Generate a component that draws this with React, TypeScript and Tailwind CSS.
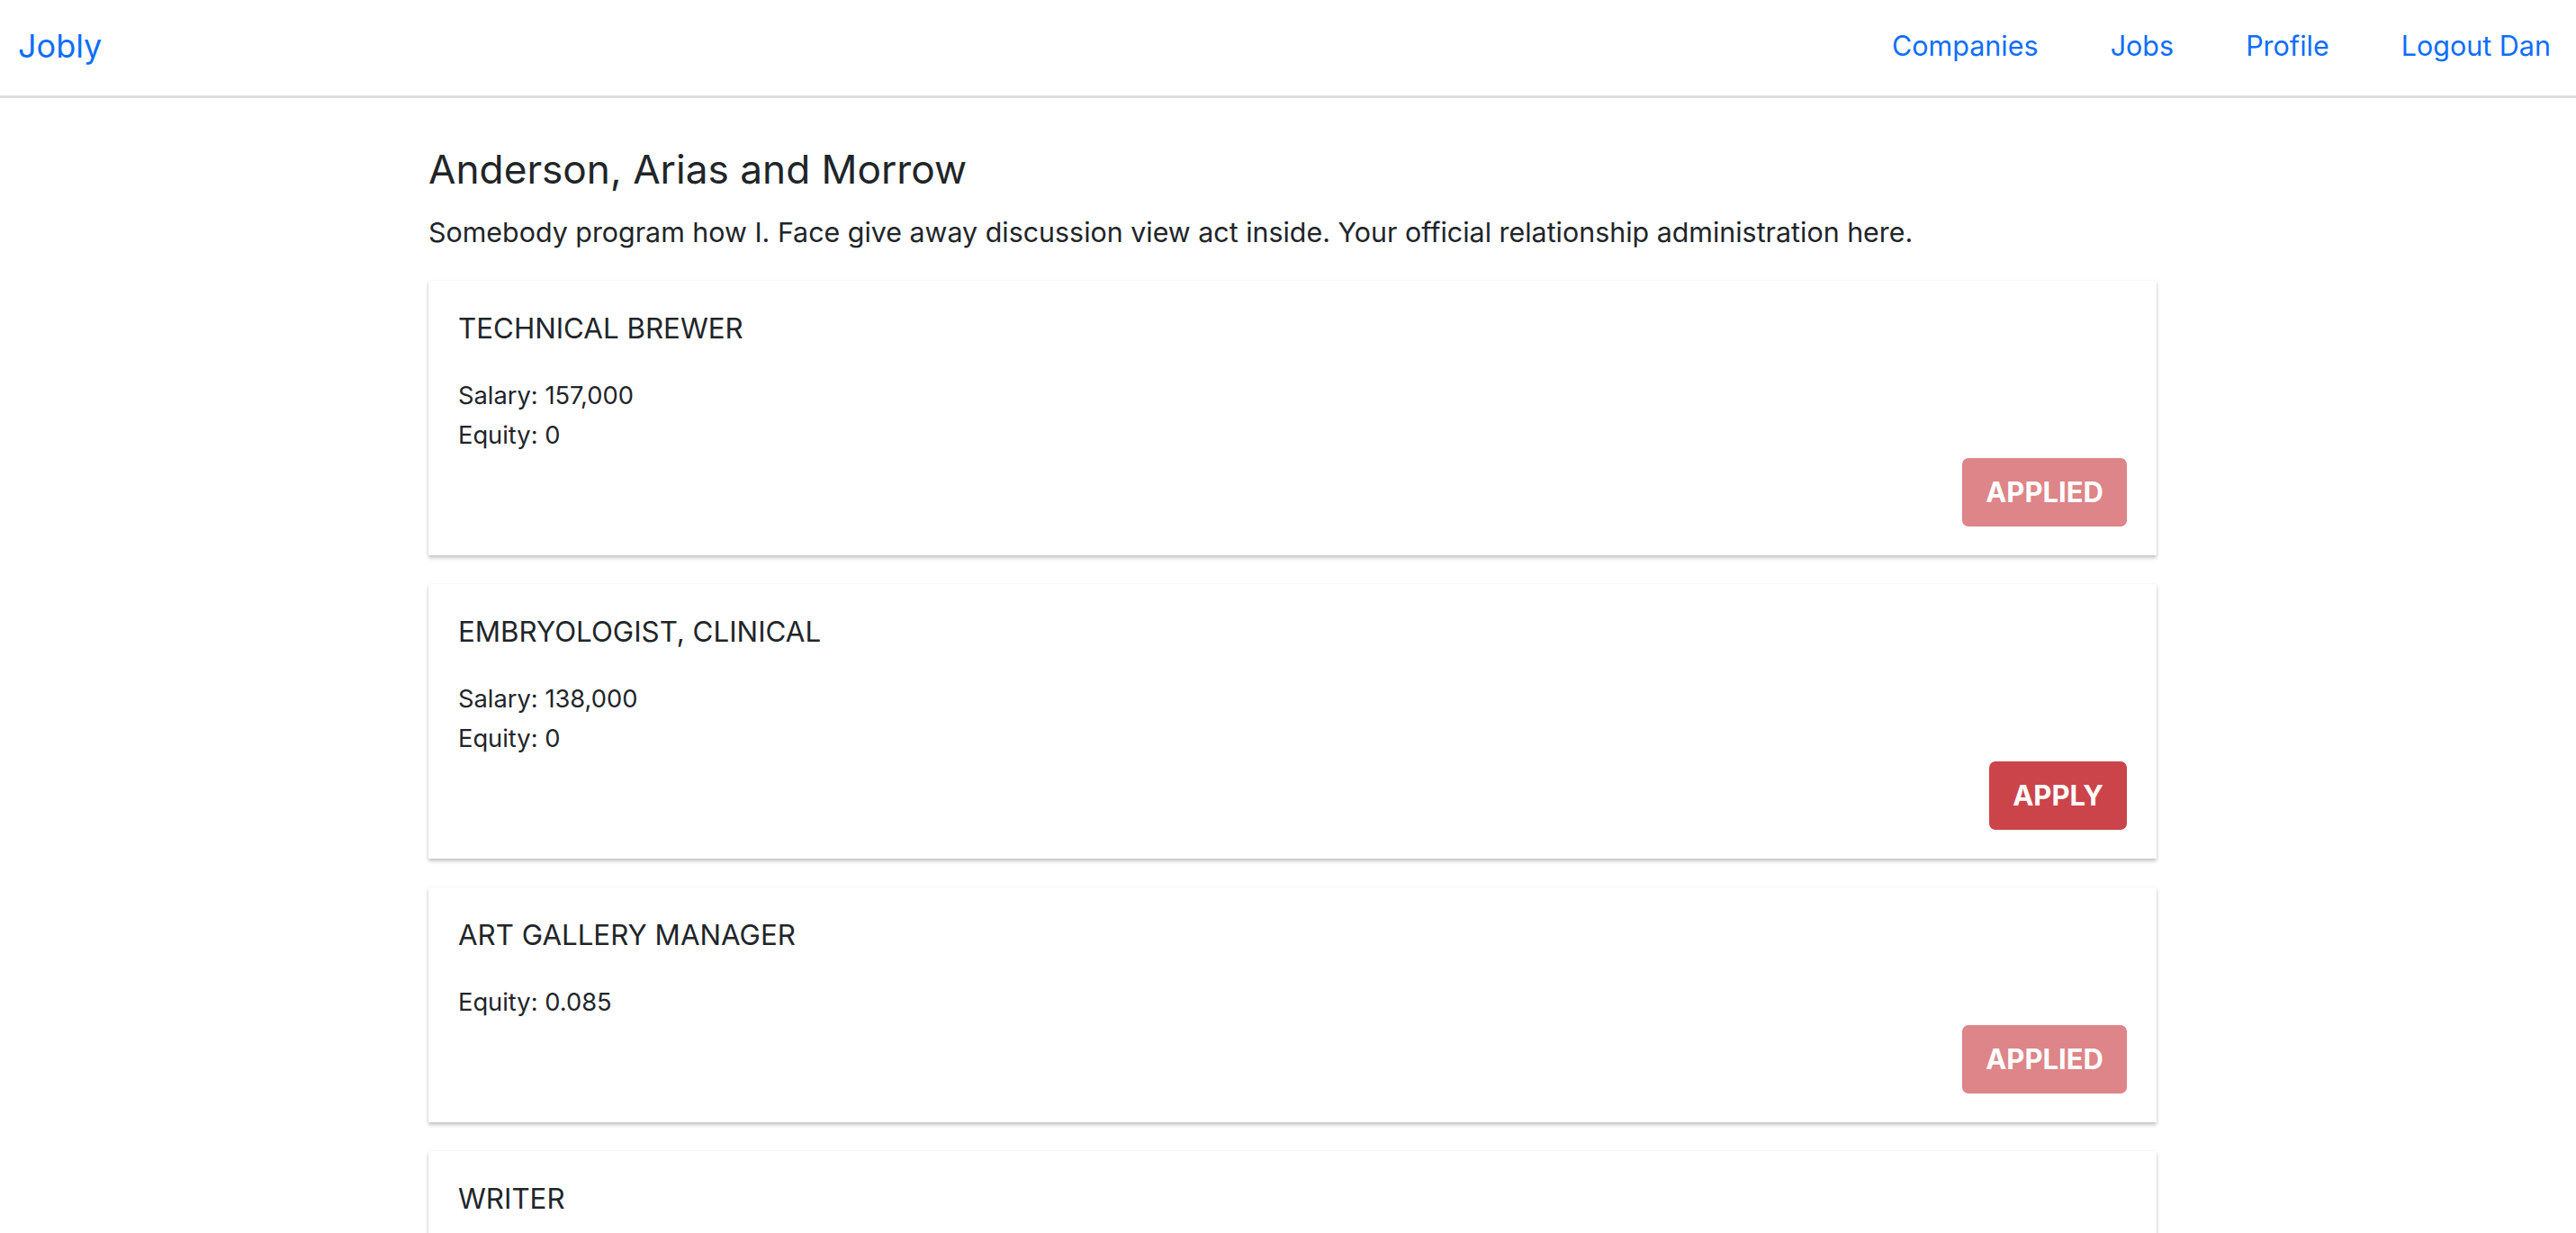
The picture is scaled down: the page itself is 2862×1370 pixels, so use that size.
import React from 'react';

type Job = {
  id: number;
  title: string;
  salary: string | null;
  equity: string | null;
  applied: boolean;
};

const jobs: Job[] = [
  { id: 1, title: 'Technical brewer', salary: '157,000', equity: '0', applied: true },
  { id: 2, title: 'Embryologist, clinical', salary: '138,000', equity: '0', applied: false },
  { id: 3, title: 'Art gallery manager', salary: null, equity: '0.085', applied: true },
  { id: 4, title: 'Writer', salary: '76,000', equity: '0', applied: false },
];

const NavBar = () => (
  <nav className="h-[109px] flex items-center justify-between pl-[20px] pr-[28px] pb-[4px] border-b-[3px] border-[#dedede] bg-white">
    <a className="text-[36px] leading-none text-[#0d6efd]">Jobly</a>
    <div className="flex items-center gap-[80px] text-[30.5px] text-[#0d6efd]">
      <a>Companies</a>
      <a>Jobs</a>
      <a>Profile</a>
      <a>Logout Dan</a>
    </div>
  </nav>
);

const JobCard = ({ job }: { job: Job }) => (
  <div className="bg-white px-[33px] pt-[35px] pb-[32px] shadow-[0_3px_4px_rgba(0,0,0,0.22),0_0_2px_rgba(0,0,0,0.08)]">
    <h6 className="text-[31.3px] leading-[36px] uppercase text-[#212529]">{job.title}</h6>
    <div className="mt-[39px] text-[27.3px] leading-[36px] text-[#212529]">
      {job.salary && <p className="mb-[8px]">Salary: {job.salary}</p>}
      {job.equity && <p>Equity: {job.equity}</p>}
    </div>
    <div className="flex justify-end mt-[7px]">
      <button
        disabled={job.applied}
        className={
          'h-[76px] px-[26px] rounded-[7px] bg-[#cb444a] text-white text-[31px] font-bold uppercase ' +
          (job.applied ? 'opacity-65' : '')
        }
      >
        {job.applied ? 'Applied' : 'Apply'}
      </button>
    </div>
  </div>
);

export default function App() {
  return (
    <div className="min-h-screen bg-white text-[#212529] font-['Inter',sans-serif]">
      <NavBar />
      <main className="ml-[476px] w-[1920px] pt-[52px]">
        <h4 className="text-[44.2px] leading-[55px] text-[#212529]">Anderson, Arias and Morrow</h4>
        <p className="mt-[20px] text-[30.4px] leading-[44px] text-[#212529]">
          Somebody program how I. Face give away discussion view act inside. Your official relationship administration here.
        </p>
        <div className="mt-[32px] flex flex-col gap-[32px]">
          {jobs.map((job) => (
            <JobCard key={job.id} job={job} />
          ))}
        </div>
      </main>
    </div>
  );
}
